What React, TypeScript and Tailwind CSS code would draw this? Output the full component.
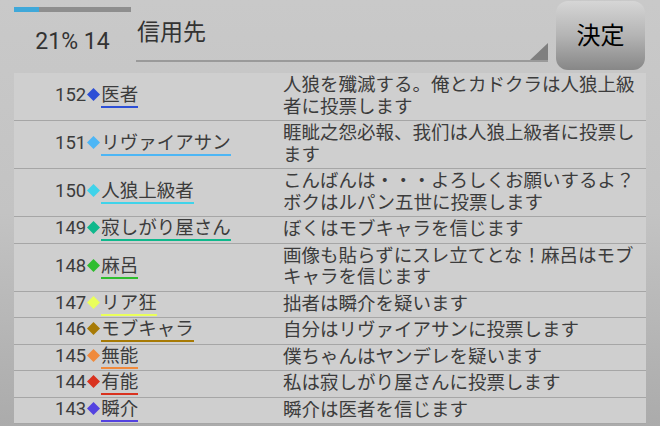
const rows = [
  { no: 152, name: '医者', color: '#2d4fd6', text: '人狼を殲滅する。俺とカドクラは人狼上級者に投票します' },
  { no: 151, name: 'リヴァイアサン', color: '#4db6f5', text: '睚眦之怨必報、我们は人狼上級者に投票します' },
  { no: 150, name: '人狼上級者', color: '#3fd3ea', text: 'こんばんは・・・よろしくお願いするよ？ボクはルパン五世に投票します' },
  { no: 149, name: '寂しがり屋さん', color: '#0fb88c', text: 'ぼくはモブキャラを信じます' },
  { no: 148, name: '麻呂', color: '#2ebd2e', text: '画像も貼らずにスレ立てとな！麻呂はモブキャラを信じます' },
  { no: 147, name: 'リア狂', color: '#eaff5a', text: '拙者は瞬介を疑います' },
  { no: 146, name: 'モブキャラ', color: '#a77a05', text: '自分はリヴァイアサンに投票します' },
  { no: 145, name: '無能', color: '#f08a3c', text: '僕ちゃんはヤンデレを疑います' },
  { no: 144, name: '有能', color: '#d9321f', text: '私は寂しがり屋さんに投票します' },
  { no: 143, name: '瞬介', color: '#5443e0', text: '瞬介は医者を信じます' },
];

const font = { fontFamily: 'Roboto, "Noto Sans CJK JP", sans-serif' };

export default function App() {
  return (
    <div
      className="w-[660px] h-[426px] overflow-hidden bg-gradient-to-b from-[#c9c9c9] via-[#c3c3c3] to-[#ababab] text-[#3c3c3c]"
      style={font}
    >
      <header className="flex h-[73px] pl-[14px]">
        <div className="w-[117px] pt-[7px]">
          <div className="h-[5px] bg-[#8e8e8e]">
            <div className="h-full w-[21%] bg-[#3fa8d9]" />
          </div>
          <div className="mt-[16px] text-center text-[23px] leading-[28px] text-[#333]">21% 14</div>
        </div>
        <div className="ml-[5px] w-[412px] pt-[18px]">
          <div className="relative h-[44px] border-b-2 border-[#9a9a9a] pl-px text-[23px] leading-[30px] text-[#333]">
            信用先
            <svg className="absolute right-0 bottom-0" width="18" height="17" viewBox="0 0 18 17">
              <polygon points="18,0 18,17 0,17" fill="#7f7f7f" />
            </svg>
          </div>
        </div>
        <button className="ml-[8px] mt-px h-[69px] w-[89px] rounded-[12px] bg-gradient-to-b from-[#d6d6d6] via-[#b4b4b4] to-[#878787] text-[24px] text-black">
          決定
        </button>
      </header>

      <div className="ml-[14px] w-[632px] bg-[#cfcfcf]">
        {rows.map((r) => (
          <div key={r.no} className="grid grid-cols-[269px_1fr] border-b border-[#a6a6a6]">
            <div className="flex items-center pl-[41px]">
              <span className="flex items-baseline text-[18.5px]">
                <span className="leading-[20px]">{r.no}</span>
                <svg className="mx-px" width="13" height="13" viewBox="0 0 13 13">
                  <polygon points="6.5,0 13,6.5 6.5,13 0,6.5" fill={r.color} />
                </svg>
                <span
                  className="inline-block border-b-2 leading-[21px]"
                  style={{ borderColor: r.color }}
                >
                  {r.name}
                </span>
              </span>
            </div>
            <div className="py-[2px] pr-[8px] text-[18.5px] leading-[21.5px]">{r.text}</div>
          </div>
        ))}
      </div>
    </div>
  );
}
